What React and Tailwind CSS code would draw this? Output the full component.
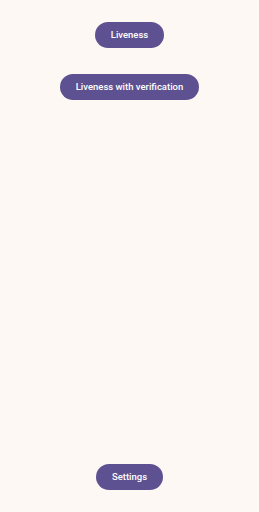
import React from "react";

function PillButton({ children }) {
  return (
    <button className="h-[26px] px-[16px] rounded-full bg-[#5e5191] text-white text-[9.5px] font-medium leading-none">
      {children}
    </button>
  );
}

export default function App() {
  return (
    <div className="h-[512px] w-full bg-[#fdf8f3] flex flex-col items-center justify-between pt-[22px] pb-[22px] font-['Roboto',sans-serif]">
      <div className="flex flex-col items-center gap-[26px]">
        <PillButton>Liveness</PillButton>
        <PillButton>Liveness with verification</PillButton>
      </div>
      <PillButton>Settings</PillButton>
    </div>
  );
}
